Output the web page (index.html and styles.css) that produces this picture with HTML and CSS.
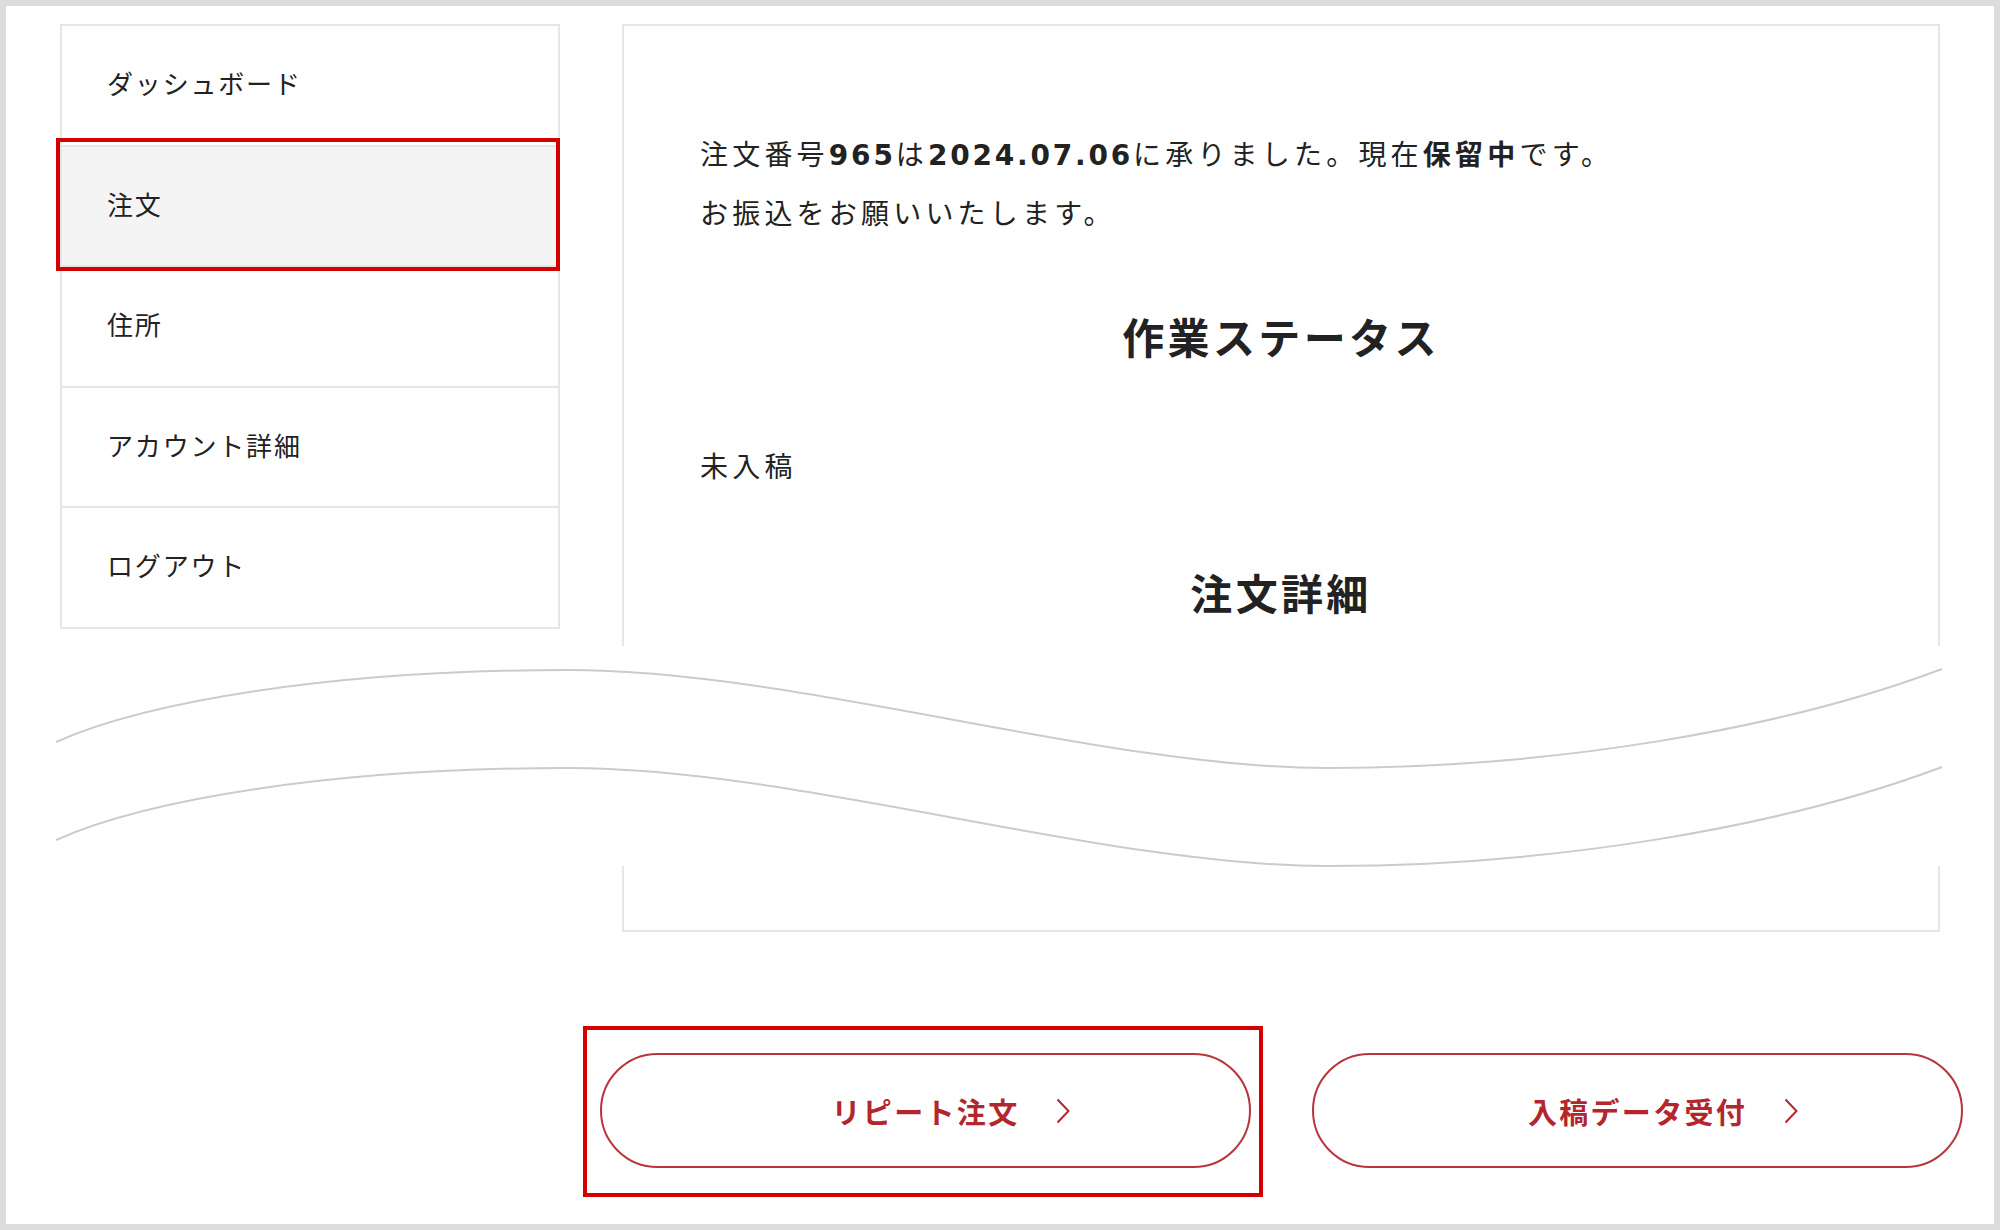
FILE: index.html
```html
<!DOCTYPE html>
<html lang="ja">
<head>
<meta charset="utf-8">
<title>注文</title>
<link rel="stylesheet" href="styles.css">
</head>
<body>
<div class="frame">
  <div class="account">
    <nav class="side-nav">
      <ul class="side-list">
        <li class="side-item">ダッシュボード</li>
        <li class="side-item is-active">注文</li>
        <li class="side-item">住所</li>
        <li class="side-item">アカウント詳細</li>
        <li class="side-item">ログアウト</li>
      </ul>
    </nav>
    <section class="panel">
      <p class="msg">注文番号<b class="num">965</b>は<b class="num">2024.07.06</b>に承りました。現在<b>保留中</b>です。<br>お振込をお願いいたします。</p>
      <h2 class="panel-title title-status">作業ステータス</h2>
      <p class="status">未入稿</p>
      <h2 class="panel-title title-detail">注文詳細</h2>
    </section>
  </div>

  <svg class="wave" width="1888" height="222" viewBox="56 646 1888 222" aria-hidden="true">
    <rect x="56" y="642" width="1888" height="224" fill="#ffffff"/>
    <path d="M56,742 C146,702 330,670 568,670 C800,670 1100,768 1327,768 C1550,768 1780,730 1942,669" fill="none" stroke="#cbcbcb" stroke-width="2"/>
    <path d="M56,840 C146,800 330,768 568,768 C800,768 1100,866 1327,866 C1550,866 1780,828 1942,767" fill="none" stroke="#cbcbcb" stroke-width="2"/>
  </svg>

  <div class="actions">
    <a class="btn is-marked"><span class="btn-label">リピート注文<svg class="chev" width="14" height="26" viewBox="0 0 14 26"><polyline points="1.5,1.5 12.5,13 1.5,24.5" fill="none" stroke="#b3262e" stroke-width="2"/></svg></span></a>
    <a class="btn"><span class="btn-label">入稿データ受付<svg class="chev" width="14" height="26" viewBox="0 0 14 26"><polyline points="1.5,1.5 12.5,13 1.5,24.5" fill="none" stroke="#b3262e" stroke-width="2"/></svg></span></a>
  </div>
</div>
</body>
</html>
```

FILE: styles.css
```css
* {
  box-sizing: border-box;
}

html, body {
  margin: 0;
  padding: 0;
}

body {
  background: #dcdcdc;
  font-family: "Noto Sans CJK JP", "Noto Sans", sans-serif;
  color: #222222;
}

.frame {
  position: relative;
  margin: 6px;
  width: 1988px;
  height: 1218px;
  background: #ffffff;
  overflow: hidden;
}

.account {
  display: flex;
  align-items: flex-start;
  gap: 62px;
  padding: 18px 54px 0 54px;
}

.side-nav {
  width: 500px;
  flex: none;
}

.side-list {
  list-style: none;
  margin: 0;
  padding: 0;
  border: 2px solid #e6e6e6;
  border-bottom: none;
}

.side-item {
  position: relative;
  height: 120.5px;
  display: flex;
  align-items: center;
  padding-left: 45px;
  padding-bottom: 5px;
  border-bottom: 2px solid #e6e6e6;
  font-size: 26px;
  letter-spacing: 0.07em;
  color: #222222;
}

.side-item.is-active {
  background: #f4f4f4;
}

.side-item.is-active::after {
  content: "";
  position: absolute;
  top: -9px;
  bottom: -6px;
  left: -6px;
  right: -2px;
  border: 4px solid #d40000;
}

.panel {
  width: 1318px;
  height: 908px;
  flex: none;
  border: 2px solid #e6e6e6;
  padding: 99px 76px 0 76px;
}

.msg {
  margin: 0;
  font-size: 28px;
  line-height: 56px;
  letter-spacing: 0.15em;
}

.msg b {
  font-weight: 700;
}

.msg .num {
  font-family: "DejaVu Sans", "Noto Sans CJK JP", sans-serif;
  letter-spacing: 0.1em;
}

.panel-title {
  margin: 0;
  text-align: center;
  font-size: 42px;
  line-height: 60px;
  font-weight: 700;
  letter-spacing: 0.08em;
}

.title-status {
  margin-top: 66px;
}

.status {
  margin: 71px 0 0 0;
  font-size: 28px;
  line-height: 56px;
  letter-spacing: 0.15em;
}

.title-detail {
  margin-top: 69px;
}

.wave {
  position: absolute;
  left: 50px;
  top: 640px;
  display: block;
}

.actions {
  display: flex;
  gap: 61px;
  padding-left: 594px;
  margin-top: 121px;
}

.btn {
  position: relative;
  width: 651px;
  height: 115px;
  border: 2px solid #b8353d;
  border-radius: 999px;
  display: flex;
  align-items: center;
  justify-content: center;
  color: #b3262e;
  font-size: 29px;
  font-weight: 700;
  letter-spacing: 0.08em;
  text-decoration: none;
}

.btn-label {
  position: relative;
  display: inline-block;
  line-height: 40px;
}

.chev {
  position: absolute;
  left: calc(100% + 37px);
  top: 50%;
  transform: translateY(-50%);
}

.btn.is-marked::after {
  content: "";
  position: absolute;
  top: -29px;
  left: -19px;
  right: -14px;
  bottom: -31px;
  border: 4px solid #d40000;
}
```
